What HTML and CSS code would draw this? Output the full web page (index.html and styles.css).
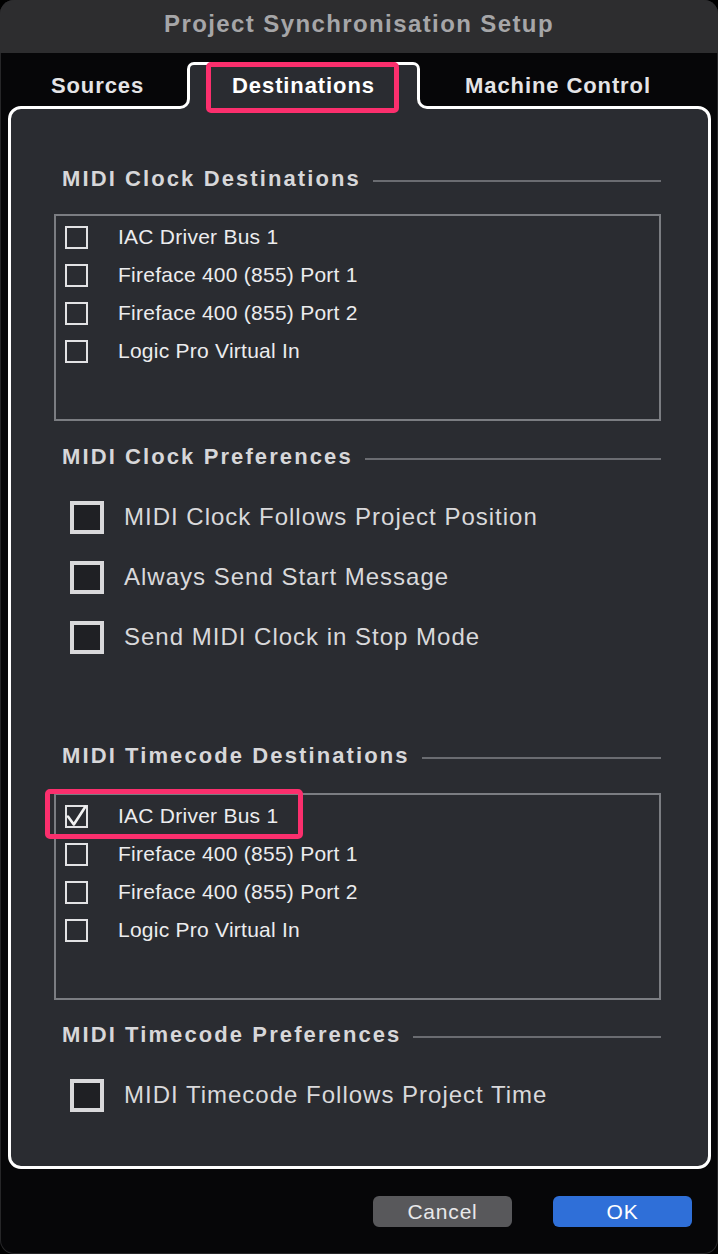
FILE: index.html
```html
<!DOCTYPE html>
<html lang="en">
<head>
<meta charset="utf-8">
<title>Project Synchronisation Setup</title>
<link rel="stylesheet" href="styles.css">
</head>
<body>
<div class="window">
  <header class="titlebar">Project Synchronisation Setup</header>
  <nav class="tabs">
    <div class="tab tab-sources">Sources</div>
    <div class="tab tab-active">Destinations<span class="flare flare-l"></span><span class="flare flare-r"></span><span class="mark mark-tab"></span></div>
    <div class="tab tab-machine">Machine Control</div>
  </nav>
  <section class="panel">
    <div class="heading"><span>MIDI Clock Destinations</span><i class="rule"></i></div>
    <div class="listbox">
      <div class="item"><span class="cb"></span><span class="label">IAC Driver Bus 1</span></div>
      <div class="item"><span class="cb"></span><span class="label">Fireface 400 (855) Port 1</span></div>
      <div class="item"><span class="cb"></span><span class="label">Fireface 400 (855) Port 2</span></div>
      <div class="item"><span class="cb"></span><span class="label">Logic Pro Virtual In</span></div>
    </div>

    <div class="heading h-prefs"><span>MIDI Clock Preferences</span><i class="rule"></i></div>
    <div class="prefs">
      <div class="pref"><span class="bigcb"></span><span class="plabel">MIDI Clock Follows Project Position</span></div>
      <div class="pref"><span class="bigcb"></span><span class="plabel">Always Send Start Message</span></div>
      <div class="pref"><span class="bigcb"></span><span class="plabel">Send MIDI Clock in Stop Mode</span></div>
    </div>

    <div class="heading h-mtc"><span>MIDI Timecode Destinations</span><i class="rule"></i></div>
    <div class="listbox lb-mtc">
      <div class="item item-marked"><span class="cb"><svg viewBox="0 0 23 23" width="23" height="23"><path d="M3 11.5 L8.8 19.5 L20.5 1.5" fill="none" stroke="#f2f2f2" stroke-width="2.6" stroke-linecap="round" stroke-linejoin="round"/></svg></span><span class="label">IAC Driver Bus 1</span><span class="mark mark-row"></span></div>
      <div class="item"><span class="cb"></span><span class="label">Fireface 400 (855) Port 1</span></div>
      <div class="item"><span class="cb"></span><span class="label">Fireface 400 (855) Port 2</span></div>
      <div class="item"><span class="cb"></span><span class="label">Logic Pro Virtual In</span></div>
    </div>

    <div class="heading h-mtcprefs"><span>MIDI Timecode Preferences</span><i class="rule"></i></div>
    <div class="prefs">
      <div class="pref"><span class="bigcb"></span><span class="plabel">MIDI Timecode Follows Project Time</span></div>
    </div>
  </section>
  <footer class="buttons">
    <button class="btn btn-cancel">Cancel</button>
    <button class="btn btn-ok">OK</button>
  </footer>
</div>
</body>
</html>
```
FILE: styles.css
```css
* { box-sizing: border-box; }
html, body {
  margin: 0;
  padding: 0;
  background: #000;
}
body {
  font-family: "Liberation Sans", Arial, sans-serif;
}
.window {
  width: 718px;
  height: 1254px;
  background: #060608;
  border-radius: 14px;
  overflow: hidden;
  box-shadow: inset 0 0 0 1px #262628;
}
.titlebar {
  height: 53px;
  background: #2d2d2f;
  color: #a6a6a8;
  font-weight: bold;
  font-size: 24px;
  letter-spacing: 1.4px;
  line-height: 48px;
  text-align: center;
}
.tabs {
  display: flex;
  height: 53px;
  align-items: stretch;
}
.tab {
  color: #e4e4e6;
  font-weight: bold;
  font-size: 22px;
  letter-spacing: 0.9px;
  line-height: 26px;
  padding-top: 20px;
  text-align: center;
}
.tab-sources {
  width: 179px;
  margin-left: 8px;
}
.tab-active {
  position: relative;
  z-index: 1;
  width: 233px;
  margin-top: 9px;
  margin-bottom: -3px;
  padding-top: 8px;
  border: 3px solid #fff;
  border-bottom: none;
  border-radius: 7px 7px 0 0;
  background: #2a2c31;
  color: #fff;
}
.flare {
  position: absolute;
  bottom: 0;
  width: 13px;
  height: 13px;
  background: #2a2c31;
}
.flare::after {
  content: "";
  position: absolute;
  inset: 0;
  background: #060608;
  border-bottom: 3px solid #fff;
}
.flare-l { right: 100%; }
.flare-l::after {
  border-right: 3px solid #fff;
  border-bottom-right-radius: 10px;
}
.flare-r { left: 100%; }
.flare-r::after {
  border-left: 3px solid #fff;
  border-bottom-left-radius: 10px;
}
.tab-machine {
  flex: 1;
  margin-right: 7px;
  padding-right: 15px;
}
.mark {
  position: absolute;
  border: 5px solid #fb2f6d;
  border-radius: 5px;
  pointer-events: none;
}
.mark-tab {
  z-index: 2;
  left: 16px;
  top: -3px;
  width: 193px;
  height: 51px;
}
.panel {
  position: relative;
  margin: 0 7px 0 8px;
  height: 1063px;
  border: 3px solid #fff;
  border-radius: 13px;
  background: #2a2c31;
  padding: 55px 47px 0 43px;
}
.heading {
  display: flex;
  align-items: center;
  height: 30px;
  padding-left: 8px;
  color: #d7d7d9;
  font-weight: bold;
  font-size: 22px;
  letter-spacing: 2.1px;
  white-space: nowrap;
}
.rule {
  flex: 1;
  height: 2px;
  margin-left: 12px;
  margin-top: 3px;
  background: #6a6c71;
}
.listbox {
  margin-top: 20px;
  height: 207px;
  border: 2px solid #7b7d82;
  padding-top: 2px;
}
.item {
  position: relative;
  display: flex;
  align-items: center;
  height: 38px;
  padding-left: 9px;
}
.cb {
  display: block;
  width: 23px;
  height: 23px;
  border: 2px solid #e2e2e4;
  position: relative;
}
.cb svg {
  position: absolute;
  left: -2px;
  top: -2px;
}
.label {
  margin-left: 30px;
  color: #ececee;
  font-size: 21px;
  letter-spacing: 0.25px;
}
.mark-row {
  left: -11px;
  top: -8px;
  width: 258px;
  height: 50px;
}
.h-prefs { margin-top: 21px; }
.prefs { margin-top: 15px; }
.pref {
  display: flex;
  align-items: center;
  height: 60px;
  padding-left: 16px;
}
.bigcb {
  display: block;
  width: 34px;
  height: 33px;
  border: 4px solid #d9d9db;
  background: #1f2024;
}
.plabel {
  margin-left: 20px;
  color: #d9d9db;
  font-size: 24px;
  letter-spacing: 1px;
}
.h-mtc { margin-top: 74px; }
.lb-mtc { margin-top: 22px; }
.h-mtcprefs { margin-top: 20px; }
.buttons {
  display: flex;
  justify-content: flex-end;
  gap: 41px;
  margin-top: 27px;
  padding-right: 26px;
}
.btn {
  width: 139px;
  height: 31px;
  border: none;
  border-radius: 6px;
  font-family: "Liberation Sans", Arial, sans-serif;
  font-size: 21px;
  letter-spacing: 0.8px;
  color: #e8e8ea;
  padding: 0;
}
.btn-cancel { background: #58585b; }
.btn-ok { background: #2f6fd8; color: #fff; }
```
